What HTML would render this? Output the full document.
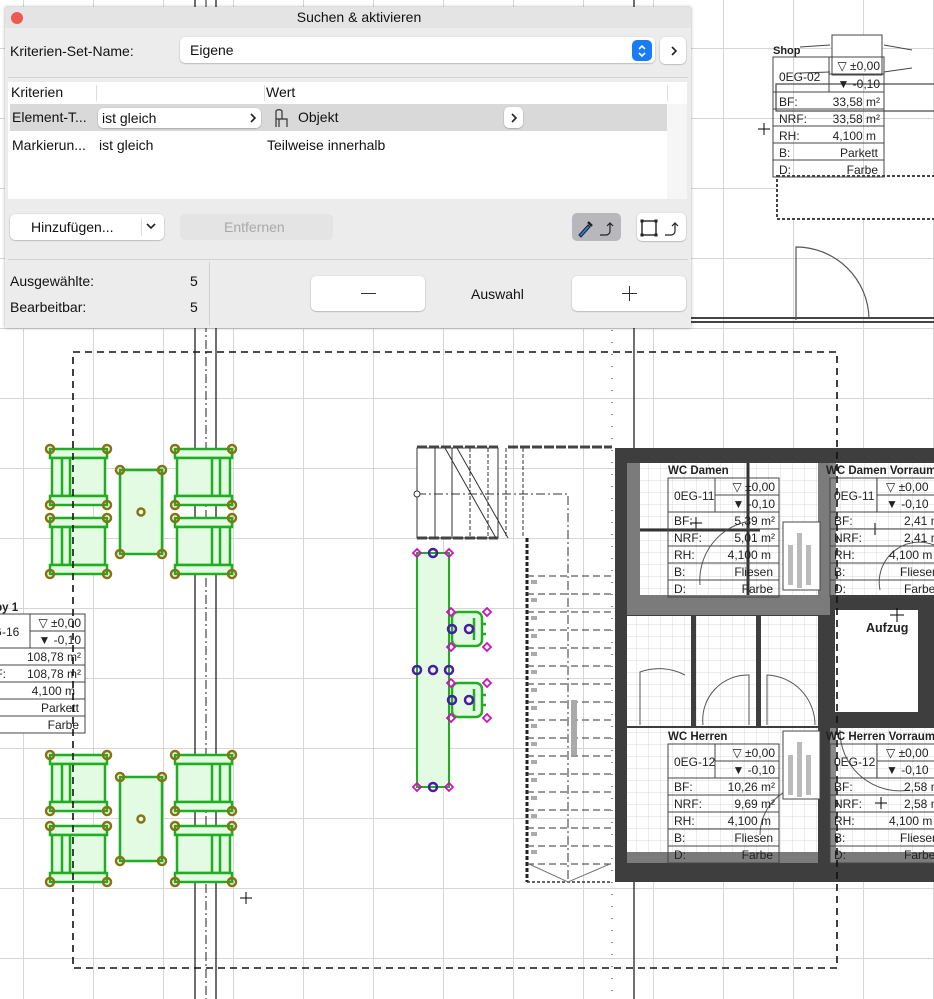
<!DOCTYPE html>
<html><head><meta charset="utf-8">
<style>
html,body{margin:0;padding:0;width:934px;height:999px;overflow:hidden;background:#fff;font-family:"Liberation Sans",sans-serif;}
#dlg{position:absolute;left:5px;top:7px;width:686px;height:321px;background:#ececec;box-shadow:0 0 3px rgba(0,0,0,.35);font-size:14px;color:#111;}
.a{position:absolute;white-space:nowrap;}
.btn{position:absolute;background:#fff;border-radius:5px;box-shadow:0 0.5px 1.5px rgba(0,0,0,.35);}
</style></head><body>
<svg width="934" height="999" style="position:absolute;left:0;top:0" xmlns="http://www.w3.org/2000/svg" font-family="Liberation Sans, sans-serif">
<defs>
<pattern id="g" x="23" y="48" width="70" height="70" patternUnits="userSpaceOnUse">
<path d="M0 0V70M0 0H70" stroke="#d6d6d6" stroke-width="2"/></pattern>
<pattern id="fg" x="0" y="0" width="12" height="12" patternUnits="userSpaceOnUse">
<path d="M0 0V12M0 0H12" stroke="#d9d9d9" stroke-width="1"/></pattern>
<g id="chL">
<rect x="50" y="0" width="57" height="9" fill="#e2fbe2" stroke="#1fae1f" stroke-width="2.5"/>
<rect x="52" y="9" width="53" height="38" fill="#e2fbe2" stroke="#1fae1f" stroke-width="2.5"/>
<rect x="50" y="47" width="57" height="9" fill="#e2fbe2" stroke="#1fae1f" stroke-width="2.5"/>
<path d="M62 9V47M70 9V47" stroke="#1fae1f" stroke-width="2.5"/>
<g fill="none" stroke="#857414" stroke-width="2.5"><circle cx="50" cy="0" r="4"/><circle cx="107" cy="0" r="4"/><circle cx="50" cy="56" r="4"/><circle cx="107" cy="56" r="4"/></g>
</g>
<g id="tb">
<rect x="120" y="0" width="42" height="84" fill="#e2fbe2" stroke="#1fae1f" stroke-width="2.5"/>
<g fill="none" stroke="#857414" stroke-width="2.5"><circle cx="120" cy="0" r="4"/><circle cx="162" cy="0" r="4"/><circle cx="120" cy="84" r="4"/><circle cx="162" cy="84" r="4"/><circle cx="141" cy="42" r="3.5"/></g>
</g>
<g id="gc">
<rect x="452" y="0" width="30" height="34" rx="6" fill="#e2fbe2" stroke="#1fae1f" stroke-width="2.5"/>
<path d="M474 6V28M482 12h4M482 22h4" stroke="#1fae1f" stroke-width="2.5"/>
<g fill="none" stroke="#d010c0" stroke-width="1.8"><path d="M451 -4l4 4-4 4-4-4z"/><path d="M487 -4l4 4-4 4-4-4z"/><path d="M451 31l4 4-4 4-4-4z"/><path d="M487 31l4 4-4 4-4-4z"/></g>
<g fill="none" stroke="#4a1aa8" stroke-width="2.5"><circle cx="452" cy="17" r="4"/><circle cx="469" cy="17" r="4"/></g>
</g>
</defs>
<rect width="934" height="999" fill="url(#g)"/>

<path d="M690 318H934M690 322H934" stroke="#444" stroke-width="2"/>
<path d="M796 320V247A73 73 0 0 1 869 318" fill="none" stroke="#555" stroke-width="1.2"/>
<rect x="832" y="35" width="50" height="40" fill="#fff" stroke="#444"/>
<path d="M800 47L830 45M800 73L830 72M884 45L912 50M884 72L912 68" stroke="#444"/>
<rect x="776" y="84" width="160" height="27" fill="none" stroke="#444" stroke-width="1.2"/>
<rect x="777" y="176" width="160" height="43" fill="#fff" stroke="#444" stroke-width="2" stroke-dasharray="3 2"/>
<path d="M758 129h12M764 123v12" stroke="#000"/>

<path d="M195 0V999M216 0V999" stroke="#222" stroke-width="1.3"/>
<path d="M206 0V999" stroke="#222" stroke-width="1" stroke-dasharray="9 3 2 3"/>
<path d="M634 0V999" stroke="#222" stroke-width="1.3"/>
<path d="M612 330V999" stroke="#222" stroke-width="1" stroke-dasharray="1 11"/>

<rect x="615" y="448" width="330" height="434" fill="#3e3e3e"/>
<rect x="627" y="463" width="203" height="152" fill="#7b7b7b"/>
<rect x="640" y="463" width="178" height="132" fill="#fff"/>
<rect x="640" y="463" width="178" height="132" fill="url(#fg)"/>
<rect x="830" y="463" width="110" height="132" fill="#fff"/>
<rect x="830" y="463" width="110" height="132" fill="url(#fg)"/>
<rect x="830" y="463" width="6" height="132" fill="#8a8a8a"/>
<rect x="627" y="616" width="191" height="110" fill="#fff"/>
<rect x="627" y="616" width="191" height="110" fill="url(#fg)"/>
<rect x="691" y="616" width="5" height="110" fill="#3e3e3e"/>
<rect x="756" y="616" width="5" height="110" fill="#3e3e3e"/>
<rect x="835" y="610" width="83" height="102" fill="#fff"/>
<text x="866" y="632" font-size="12.5" font-weight="bold" fill="#222">Aufzug</text>
<path d="M890 615h14M897 608v14" stroke="#000"/>
<rect x="627" y="728" width="191" height="135" fill="#fff"/>
<rect x="627" y="728" width="191" height="135" fill="url(#fg)"/>
<rect x="627" y="852" width="191" height="11" fill="#7b7b7b"/>
<rect x="830" y="728" width="110" height="135" fill="#fff"/>
<rect x="830" y="728" width="110" height="135" fill="url(#fg)"/>
<rect x="830" y="852" width="110" height="11" fill="#7b7b7b"/>
<rect x="830" y="728" width="6" height="135" fill="#8a8a8a"/>
<path d="M640 530H760M748 463V595" stroke="#333" stroke-width="3"/>
<g fill="none" stroke="#555" stroke-width="1">
<path d="M640 725V672A56 56 0 0 1 685 675M703 725A45 45 0 0 1 749 675V725M767 725V675A50 50 0 0 1 815 725"/>
<path d="M750 521A60 60 0 0 0 700 585M880 590A40 40 0 0 1 934 545M760 835A50 50 0 0 1 810 785M840 730A60 60 0 0 0 910 790"/>
</g>
<g fill="#fff" stroke="#444"><rect x="783" y="522" width="37" height="68"/><rect x="783" y="731" width="37" height="68"/></g>
<g fill="#bbb"><rect x="788" y="545" width="5" height="40"/><rect x="797" y="533" width="5" height="55"/><rect x="806" y="545" width="5" height="40"/><rect x="788" y="755" width="5" height="40"/><rect x="797" y="742" width="5" height="55"/><rect x="806" y="755" width="5" height="40"/></g>

<g stroke="#333" fill="none" stroke-width="1">
<rect x="417" y="448" width="81" height="90" fill="#fff"/>
<path d="M417 447H498M508 447H612M417 538H498" stroke="#444" stroke-width="3" stroke-dasharray="10 2"/>
<path d="M445 448L496 538M457 448L508 538M435 448V538M452 448V538"/>
<path d="M470 448V538M488 448V538M506 448V538M523 448V538" stroke-dasharray="4 2"/>
<path d="M417 494H568V882" stroke-dasharray="9 3 2 3"/>
<path d="M527 538V882" stroke="#222" stroke-width="3" stroke-dasharray="4 2"/>
<path d="M527 576H612M527 594H612M527 612H612M527 630H612M527 648H612M527 666H612M527 684H612M527 702H612M527 720H612M527 738H612M527 756H612M527 774H612M527 792H612M527 810H612M527 828H612M527 846H612M527 864H612" stroke-dasharray="7 4"/>
<path d="M527 882H612" stroke-dasharray="3 2" stroke-width="1.5"/>
<path d="M529 864L568 882L610 864" stroke="#777"/>
<circle cx="417" cy="494" r="3" fill="#fff"/>
</g>
<g fill="#aaa"><rect x="531" y="580" width="6" height="4"/><rect x="531" y="598" width="6" height="4"/><rect x="531" y="616" width="6" height="4"/><rect x="531" y="634" width="6" height="4"/><rect x="531" y="652" width="6" height="4"/><rect x="531" y="670" width="6" height="4"/><rect x="531" y="688" width="6" height="4"/><rect x="531" y="706" width="6" height="4"/><rect x="531" y="724" width="6" height="4"/><rect x="531" y="742" width="6" height="4"/><rect x="531" y="760" width="6" height="4"/><rect x="531" y="778" width="6" height="4"/><rect x="531" y="796" width="6" height="4"/><rect x="531" y="814" width="6" height="4"/><rect x="531" y="832" width="6" height="4"/><rect x="531" y="850" width="6" height="4"/><rect x="571" y="700" width="6" height="55"/></g>

<rect x="417" y="553" width="32" height="234" fill="#e2fbe2" stroke="#1fae1f" stroke-width="2"/>
<use href="#gc" transform="translate(0,612)"/>
<use href="#gc" transform="translate(0,683)"/>
<g fill="none" stroke="#d010c0" stroke-width="1.8"><path d="M417 549l4 4-4 4-4-4z"/><path d="M449 549l4 4-4 4-4-4z"/><path d="M417 783l4 4-4 4-4-4z"/><path d="M449 783l4 4-4 4-4-4z"/></g>
<g fill="none" stroke="#4a1aa8" stroke-width="2.5"><circle cx="433" cy="553" r="4"/><circle cx="433" cy="787" r="4"/><circle cx="417" cy="670" r="4"/><circle cx="433" cy="670" r="4"/><circle cx="449" cy="670" r="4"/></g>

<use href="#chL" transform="translate(0,449)"/>
<use href="#chL" transform="translate(0,518)"/>
<use href="#chL" transform="translate(0,755)"/>
<use href="#chL" transform="translate(0,826)"/>
<use href="#chL" transform="translate(282,449) scale(-1,1)"/>
<use href="#chL" transform="translate(282,518) scale(-1,1)"/>
<use href="#chL" transform="translate(282,755) scale(-1,1)"/>
<use href="#chL" transform="translate(282,826) scale(-1,1)"/>
<use href="#tb" transform="translate(0,470)"/>
<use href="#tb" transform="translate(0,777)"/>
<path d="M240 898h12M246 892v12" stroke="#000"/>
<path d="M690 523h12M696 517v12M875 523v12M875 803h12M881 797v12" stroke="#000"/>

<g font-size="12" fill="#222" stroke="none">
<g transform="translate(773,57)">
<text x="0" y="-3" font-weight="bold" font-size="11">Shop</text>
<g fill="none" stroke="#444"><rect x="0" y="0" width="111" height="120"/><path d="M56 0V35M56 17H111M0 35H111M0 52H111M0 69H111M0 86H111M0 103H111"/></g>
<text x="6" y="24">0EG-02</text><text x="107" y="13" text-anchor="end">▽ ±0,00</text><text x="107" y="31" text-anchor="end">▼ -0,10</text>
<text x="6" y="49">BF:</text><text x="107" y="49" text-anchor="end">33,58 m²</text>
<text x="6" y="66">NRF:</text><text x="107" y="66" text-anchor="end">33,58 m²</text>
<text x="6" y="83">RH:</text><text x="103" y="83" text-anchor="end">4,100 m</text>
<text x="6" y="100">B:</text><text x="105" y="100" text-anchor="end">Parkett</text>
<text x="6" y="117">D:</text><text x="105" y="117" text-anchor="end">Farbe</text>
</g>
<g transform="translate(668,478)">
<text x="0" y="-4" font-weight="bold" font-size="11.5">WC Damen</text>
<g fill="none" stroke="#444"><rect x="0" y="0" width="111" height="119"/><path d="M47 0V34M47 17H111M0 34H111M0 51H111M0 68H111M0 85H111M0 102H111"/></g>
<text x="6" y="22">0EG-11</text><text x="107" y="13" text-anchor="end">▽ ±0,00</text><text x="107" y="30" text-anchor="end">▼ -0,10</text>
<text x="6" y="47">BF:</text><text x="107" y="47" text-anchor="end">5,39 m²</text>
<text x="6" y="64">NRF:</text><text x="107" y="64" text-anchor="end">5,01 m²</text>
<text x="6" y="81">RH:</text><text x="103" y="81" text-anchor="end">4,100 m</text>
<text x="6" y="98">B:</text><text x="105" y="98" text-anchor="end">Fliesen</text>
<text x="6" y="115">D:</text><text x="105" y="115" text-anchor="end">Farbe</text>
</g>
<g transform="translate(668,744)">
<text x="0" y="-4" font-weight="bold" font-size="11.5">WC Herren</text>
<g fill="none" stroke="#444"><rect x="0" y="0" width="111" height="119"/><path d="M47 0V34M47 17H111M0 34H111M0 51H111M0 68H111M0 85H111M0 102H111"/></g>
<text x="6" y="22">0EG-12</text><text x="107" y="13" text-anchor="end">▽ ±0,00</text><text x="107" y="30" text-anchor="end">▼ -0,10</text>
<text x="6" y="47">BF:</text><text x="107" y="47" text-anchor="end">10,26 m²</text>
<text x="6" y="64">NRF:</text><text x="107" y="64" text-anchor="end">9,69 m²</text>
<text x="6" y="81">RH:</text><text x="103" y="81" text-anchor="end">4,100 m</text>
<text x="6" y="98">B:</text><text x="105" y="98" text-anchor="end">Fliesen</text>
<text x="6" y="115">D:</text><text x="105" y="115" text-anchor="end">Farbe</text>
</g>
<g transform="translate(830,478)">
<text x="-4" y="-4" font-weight="bold" font-size="11.5">WC Damen Vorraum</text>
<g fill="none" stroke="#444"><rect x="0" y="0" width="111" height="119"/><path d="M47 0V34M47 17H111M0 34H111M0 51H111M0 68H111M0 85H111M0 102H111"/></g>
<text x="4" y="22">0EG-11</text><text x="56" y="13">▽ ±0,00</text><text x="56" y="30">▼ -0,10</text>
<text x="4" y="47">BF:</text><text x="74" y="47">2,41 m²</text>
<text x="4" y="64">NRF:</text><text x="74" y="64">2,41 m²</text>
<text x="4" y="81">RH:</text><text x="59" y="81">4,100 m</text>
<text x="4" y="98">B:</text><text x="70" y="98">Fliesen</text>
<text x="4" y="115">D:</text><text x="74" y="115">Farbe</text>
</g>
<g transform="translate(830,744)">
<text x="-4" y="-4" font-weight="bold" font-size="11.5">WC Herren Vorraum</text>
<g fill="none" stroke="#444"><rect x="0" y="0" width="111" height="119"/><path d="M47 0V34M47 17H111M0 34H111M0 51H111M0 68H111M0 85H111M0 102H111"/></g>
<text x="4" y="22">0EG-12</text><text x="56" y="13">▽ ±0,00</text><text x="56" y="30">▼ -0,10</text>
<text x="4" y="47">BF:</text><text x="74" y="47">2,58 m²</text>
<text x="4" y="64">NRF:</text><text x="74" y="64">2,58 m²</text>
<text x="4" y="81">RH:</text><text x="59" y="81">4,100 m</text>
<text x="4" y="98">B:</text><text x="70" y="98">Fliesen</text>
<text x="4" y="115">D:</text><text x="74" y="115">Farbe</text>
</g>
<g transform="translate(-26,614)">
<text x="0" y="-3" font-weight="bold" font-size="11.5">Lobby 1</text>
<g fill="#fff" stroke="#444"><rect x="0" y="0" width="111" height="119"/><path d="M56 0V34M56 17H111M0 34H111M0 51H111M0 68H111M0 85H111M0 102H111"/></g>
<text x="4" y="22">0EG-16</text><text x="107" y="13" text-anchor="end">▽ ±0,00</text><text x="107" y="30" text-anchor="end">▼ -0,10</text>
<text x="4" y="47">BF:</text><text x="107" y="47" text-anchor="end">108,78 m²</text>
<text x="4" y="64">NRF:</text><text x="107" y="64" text-anchor="end">108,78 m²</text>
<text x="4" y="81">RH:</text><text x="101" y="81" text-anchor="end">4,100 m</text>
<text x="4" y="98">B:</text><text x="105" y="98" text-anchor="end">Parkett</text>
<text x="4" y="115">D:</text><text x="105" y="115" text-anchor="end">Farbe</text>
</g>
</g>
<!-- dashed selection frame on top -->
<rect x="73" y="352" width="764" height="616" fill="none" stroke="#111" stroke-width="1.6" stroke-dasharray="7 5"/>
</svg>

<div id="dlg">
<div class="a" style="left:0;top:0;width:686px;height:21px;background:#e4e4e4;"></div>
<div class="a" style="left:6px;top:5px;width:12px;height:12px;border-radius:6px;background:#ee5a52;"></div>
<div class="a" style="left:0;top:2px;width:708px;text-align:center;font-size:14px;">Suchen &amp; aktivieren</div>
<div class="a" style="left:5px;top:36px;">Kriterien-Set-Name:</div>
<div class="btn" style="left:175px;top:30px;width:475px;height:26px;"></div>
<div class="a" style="left:185px;top:35px;">Eigene</div>
<div class="a" style="left:627px;top:33px;width:20px;height:21px;border-radius:5px;background:#1a7cf5;"></div>
<svg class="a" style="left:631px;top:36px" width="12" height="16"><path d="M3 6l3-3 3 3M3 10l3 3 3-3" fill="none" stroke="#fff" stroke-width="1.6"/></svg>
<div class="btn" style="left:655px;top:30px;width:26px;height:27px;"></div>
<svg class="a" style="left:664px;top:37px" width="10" height="14"><path d="M3 3l4 4-4 4" fill="none" stroke="#222" stroke-width="1.6"/></svg>
<div class="a" style="left:3px;top:70px;width:680px;height:1px;background:#d2d2d2;"></div>
<div class="a" style="left:3px;top:75px;width:679px;height:117px;background:#fff;"></div>
<div class="a" style="left:662px;top:97px;width:20px;height:95px;background:#f6f6f6;"></div>
<div class="a" style="left:91px;top:78px;width:1px;height:16px;background:#ddd;"></div>
<div class="a" style="left:259px;top:78px;width:1px;height:16px;background:#ddd;"></div>
<div class="a" style="left:662px;top:78px;width:1px;height:16px;background:#ddd;"></div>
<div class="a" style="left:6px;top:77px;">Kriterien</div>
<div class="a" style="left:261px;top:77px;">Wert</div>
<div class="a" style="left:5px;top:97px;width:657px;height:27px;background:#d9d9d9;"></div>
<div class="a" style="left:7px;top:102px;">Element-T...</div>
<div class="btn" style="left:93px;top:101px;width:163px;height:20px;"></div>
<div class="a" style="left:97px;top:103px;">ist gleich</div>
<svg class="a" style="left:243px;top:104px" width="10" height="14"><path d="M3 3l4 4-4 4" fill="none" stroke="#222" stroke-width="1.6"/></svg>
<svg class="a" style="left:267px;top:100px" width="16" height="22"><path d="M4 20V4a4 4 0 0 1 6 0v8H15v8M4 12h11M7 12v8" fill="none" stroke="#333" stroke-width="1.2"/></svg>
<div class="a" style="left:293px;top:102px;">Objekt</div>
<div class="btn" style="left:499px;top:100px;width:19px;height:21px;"></div>
<svg class="a" style="left:504px;top:104px" width="10" height="14"><path d="M3 3l4 4-4 4" fill="none" stroke="#222" stroke-width="1.6"/></svg>
<div class="a" style="left:7px;top:130px;">Markierun...</div>
<div class="a" style="left:94px;top:130px;">ist gleich</div>
<div class="a" style="left:262px;top:130px;">Teilweise innerhalb</div>
<div class="btn" style="left:5px;top:207px;width:154px;height:26px;"></div>
<div class="a" style="left:26px;top:212px;">Hinzufügen...</div>
<div class="a" style="left:136px;top:211px;width:1px;height:18px;background:#ddd;"></div>
<svg class="a" style="left:140px;top:213px" width="12" height="12"><path d="M2 4l4 4 4-4" fill="none" stroke="#222" stroke-width="1.6"/></svg>
<div class="a" style="left:175px;top:207px;width:153px;height:26px;background:#e4e4e4;border-radius:5px;"></div>
<div class="a" style="left:219px;top:212px;color:#a9a9a9;">Entfernen</div>
<div class="a" style="left:567px;top:206px;width:49px;height:28px;background:#b8b8bc;border-radius:5px;"></div>
<svg class="a" style="left:567px;top:206px" width="49" height="28"><path d="M7 22l9-10 2 2-9 10z" fill="#2a7ae8" stroke="#222" stroke-width="1"/><path d="M16 9l4 4" stroke="#222" stroke-width="2.5"/><path d="M28 22h6a4 4 0 0 0 4-4V10M35 13l3-3 3 3" fill="none" stroke="#222" stroke-width="1.2"/></svg>
<div class="btn" style="left:632px;top:206px;width:49px;height:28px;"></div>
<svg class="a" style="left:632px;top:206px" width="49" height="28"><rect x="5" y="8" width="14" height="14" fill="none" stroke="#222" stroke-width="1.4"/><g fill="#222"><rect x="3.5" y="6.5" width="3" height="3"/><rect x="17.5" y="6.5" width="3" height="3"/><rect x="3.5" y="20.5" width="3" height="3"/><rect x="17.5" y="20.5" width="3" height="3"/></g><path d="M28 22h6a4 4 0 0 0 4-4V10M35 13l3-3 3 3" fill="none" stroke="#222" stroke-width="1.2"/></svg>
<div class="a" style="left:3px;top:252px;width:680px;height:1px;background:#d2d2d2;"></div>
<div class="a" style="left:204px;top:255px;width:1px;height:64px;background:#d2d2d2;"></div>
<div class="a" style="left:5px;top:266px;">Ausgewählte:</div>
<div class="a" style="left:185px;top:266px;">5</div>
<div class="a" style="left:5px;top:292px;">Bearbeitbar:</div>
<div class="a" style="left:185px;top:292px;">5</div>
<div class="btn" style="left:306px;top:269px;width:114px;height:35px;"></div>
<div class="a" style="left:356px;top:286px;width:15px;height:1.3px;background:#333;"></div>
<div class="a" style="left:466px;top:279px;">Auswahl</div>
<div class="btn" style="left:567px;top:269px;width:114px;height:35px;"></div>
<div class="a" style="left:617px;top:286px;width:15px;height:1.3px;background:#333;"></div>
<div class="a" style="left:624px;top:279px;width:1.3px;height:15px;background:#333;"></div>
</div>
</body></html>
